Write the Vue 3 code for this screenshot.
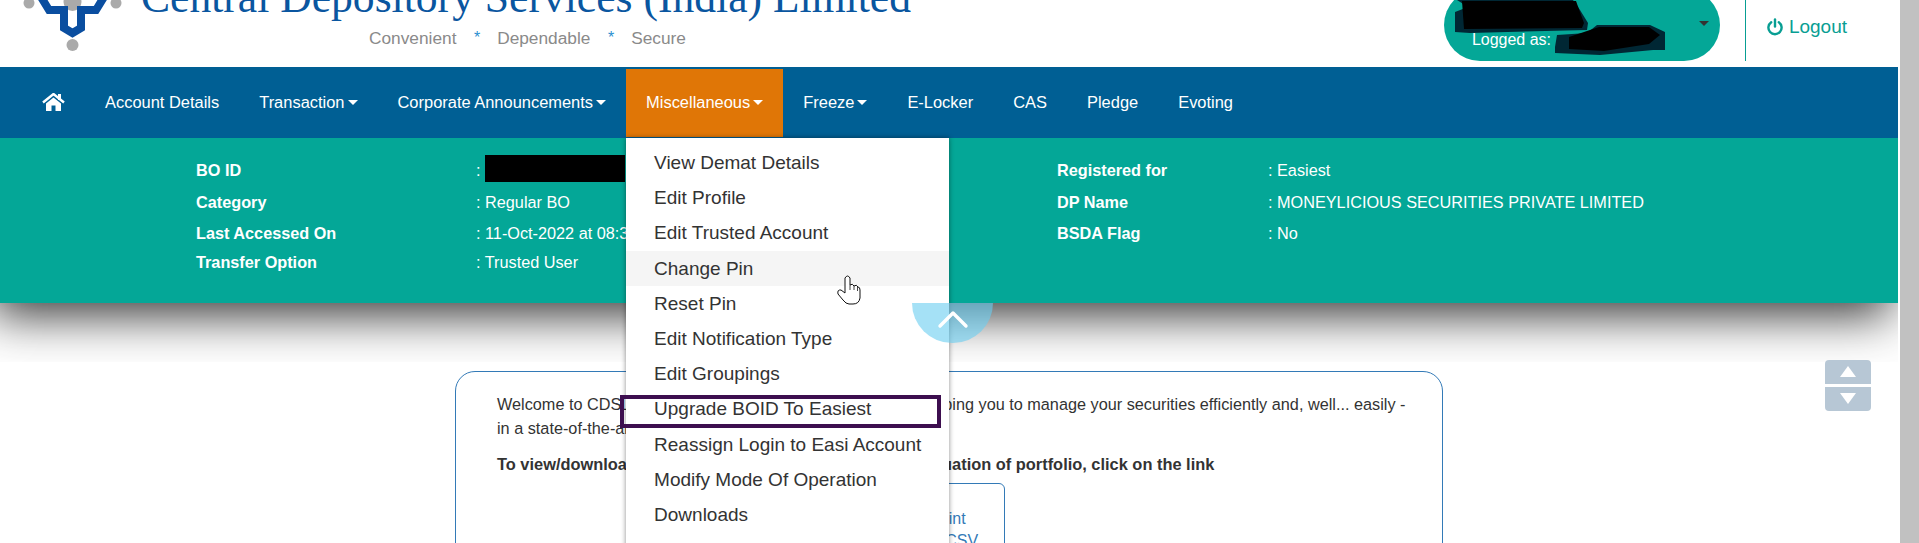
<script setup>
const navItems = [
  { label: 'Account Details' },
  { label: 'Transaction', caret: true },
  { label: 'Corporate Announcements', caret: true },
  { label: 'Miscellaneous', caret: true, active: true },
  { label: 'Freeze', caret: true },
  { label: 'E-Locker' },
  { label: 'CAS' },
  { label: 'Pledge' },
  { label: 'Evoting' }
]

const menuItems = [
  'View Demat Details',
  'Edit Profile',
  'Edit Trusted Account',
  'Change Pin',
  'Reset Pin',
  'Edit Notification Type',
  'Edit Groupings',
  'Upgrade BOID To Easiest',
  'Reassign Login to Easi Account',
  'Modify Mode Of Operation',
  'Downloads',
  'De-Register'
]

const details = [
  { label: 'BO ID', hidden: true, side: 'Registered for', sideValue: 'Easiest' },
  { label: 'Category', value: 'Regular BO', side: 'DP Name', sideValue: 'MONEYLICIOUS SECURITIES PRIVATE LIMITED' },
  { label: 'Last Accessed On', value: '11-Oct-2022 at 08:35 PM', side: 'BSDA Flag', sideValue: 'No' },
  { label: 'Transfer Option', value: 'Trusted User' }
]
</script>

<template>
  <div class="screen">
    <div class="page">
      <header class="top-bar">
        <svg class="logo" width="132" height="52" viewBox="0 0 132 52">
          <circle cx="29" cy="3" r="5.5" fill="#aaa" />
          <circle cx="116" cy="3" r="5.5" fill="#aaa" />
          <circle cx="72.5" cy="2" r="9" fill="#aaa" />
          <circle cx="72.5" cy="45" r="6" fill="#aaa" />
          <path d="M41 -3 L49 10 L64 10 L64 28 L72.5 33 L81 28 L81 10 L96 10 L104 -3" fill="none" stroke="#0a4ea0" stroke-width="8" />
        </svg>
        <div class="brand">
          <h1 class="brand-title">Central Depository Services (India) Limited</h1>
          <div class="brand-tag">
            <span>Convenient</span><i>*</i><span>Dependable</span><i>*</i><span>Secure</span>
          </div>
        </div>
        <div class="user-pill">
          <svg class="scribble" width="276" height="72" viewBox="0 0 276 72">
            <path d="M13 11 L129 11 L136 21 L144 34 L143 41 L26 44 L11 43 L11 23 L24 18 Z" fill="#012" opacity="0.85" />
            <path d="M18 12 L132 12 L140 34 L138 39 L20 40 Z" fill="#000" />
            <path d="M113 46 L111 58 L111 64 L156 66 L209 61 L221 61 L221 43 L206 36 L153 36 L143 44 Z" fill="#012" opacity="0.85" />
            <path d="M125 48 L125 60 L160 62 L205 55 L216 46 L205 38 L155 38 Z" fill="#000" />
          </svg>
          <span class="logged">Logged as:</span>
          <span class="pill-caret"></span>
        </div>
        <div class="logout">
          <svg width="16" height="18" viewBox="0 0 16 18" fill="none" stroke="#089e93" stroke-width="2.4" stroke-linecap="round">
            <path d="M8 1.5 V8.5" />
            <path d="M4.2 4.2 A6.6 6.6 0 1 0 11.8 4.2" />
          </svg>
          <span>Logout</span>
        </div>
      </header>

      <nav class="main-nav">
        <svg class="home" width="23" height="18" viewBox="0 0 23 18">
          <rect x="16" y="1" width="3" height="6" fill="#fff" />
          <path d="M1 9.5 L11.5 1 L22 9.5" fill="none" stroke="#fff" stroke-width="2.4" />
          <path d="M4 10.5 L11.5 4.5 L19 10.5 V18 H13.5 V12.5 H9.5 V18 H4 Z" fill="#fff" />
        </svg>
        <div v-for="item in navItems" :key="item.label" class="nav-item" :class="{ active: item.active }">
          {{ item.label }}<span v-if="item.caret" class="caret"></span>
          <div v-if="item.active" class="dropdown">
            <a v-for="entry in menuItems" :key="entry" class="dropdown-row" :class="{ hover: entry === 'Change Pin' }">{{ entry }}</a>
            <span class="mark"></span>
            <svg class="cursor" width="60" height="50" viewBox="0 0 60 50">
              <path d="M24 33 V18 Q26.5 14 29 18 V25 Q31.5 23 33 26 Q35.5 24 37 27 Q39 27 39 30 V38 Q38 44 32 44 H28 Q25 44 22 40 L17 34 Q16 29.5 20 30 L24 33 Z" fill="#fff" stroke="#111" stroke-width="1" />
              <path d="M29 25 V30 M33 26 V30 M36.5 27 V31" fill="none" stroke="#111" stroke-width="0.8" />
            </svg>
          </div>
        </div>
      </nav>

      <div class="summary-wrap">
        <section class="summary">
          <template v-for="row in details" :key="row.label">
            <div class="key">{{ row.label }}</div>
            <div>: <span v-if="row.hidden" class="blackout"></span>{{ row.value }}</div>
            <div class="key">{{ row.side }}</div>
            <div><template v-if="row.side">: {{ row.sideValue }}</template></div>
          </template>
        </section>
      </div>

      <main class="welcome">
        <p>Welcome to CDSL's Easiest, a convenient facility aimed at helping you to manage your securities efficiently and, well... easily - in a state-of-the-art environment.</p>
        <p class="strong">To view/download your Demat account statement and valuation of portfolio, click on the link</p>
        <div class="links">
          <a>View / Print</a>
          <a>View as CSV</a>
        </div>
      </main>

      <div class="collapse-tab">
        <svg width="81" height="40" viewBox="0 0 81 40">
          <path d="M28 23 L41 10 L54 23" fill="none" stroke="#fff" stroke-width="3.4" stroke-linecap="round" stroke-linejoin="round" />
        </svg>
      </div>

      <div class="scroll-btns">
        <button type="button" class="up"></button>
        <button type="button" class="down"></button>
      </div>
    </div>
    <div class="scrollbar"></div>
  </div>
</template>

<style>
html,
body {
  margin: 0;
  background: #fff;
}
</style>

<style scoped>
.screen {
  display: flex;
  height: 543px;
  overflow: hidden;
  font-family: "Liberation Sans", Arial, sans-serif;
  font-size: 16px;
  color: #333;
  background: #fff;
}

.page {
  position: relative;
  width: 1898px;
  flex: none;
}

.scrollbar {
  width: 19px;
  margin-left: 2px;
  flex: none;
  background: #c1c1c1;
}

.top-bar {
  display: flex;
  align-items: flex-start;
  height: 67px;
}

.logo {
  flex: none;
  width: 132px;
  margin-right: 9px;
}

.brand {
  flex: 1;
  min-width: 0;
}

.brand-title {
  height: 20px;
  margin: -13px 0 0;
  font-family: "Liberation Serif", "Times New Roman", serif;
  font-size: 43.6px;
  line-height: 20px;
  font-weight: 400;
  white-space: nowrap;
  color: #0a56a0;
}

.brand-tag {
  display: flex;
  gap: 11px;
  margin: 20px 0 0 228px;
  font-size: 17.3px;
  line-height: 22px;
  color: #8a8a8a;
}

.brand-tag i {
  font-style: normal;
  font-size: 16px;
  color: #2a8fd0;
  margin-right: 6px;
  margin-left: 6.5px;
}

.user-pill {
  position: relative;
  display: flex;
  justify-content: space-between;
  flex: none;
  box-sizing: border-box;
  width: 276px;
  height: 72px;
  margin-top: -11px;
  padding: 40px 11px 0 28px;
  border-radius: 36px;
  background: #04a797;
  color: #fff;
  line-height: 22px;
}

.scribble {
  position: absolute;
  top: 0;
  left: 0;
}

.pill-caret {
  margin-top: -8px;
  width: 0;
  height: 0;
  border-top: 5px solid #333;
  border-left: 5px solid transparent;
  border-right: 5px solid transparent;
}

.logout {
  display: flex;
  align-items: center;
  gap: 6px;
  flex: none;
  box-sizing: border-box;
  height: 61px;
  margin: 0 51px 0 25px;
  padding: 0 0 7px 21px;
  border-left: 1px solid #089e93;
  font-size: 19px;
  color: #089e93;
}

.main-nav {
  display: flex;
  align-items: flex-start;
  height: 71px;
  padding-left: 22px;
  background: #005f94;
  color: #fff;
  font-size: 16.45px;
}

.home {
  flex: none;
  margin: 26px 20px 0 20px;
}

.nav-item {
  position: relative;
  display: flex;
  align-items: center;
  box-sizing: border-box;
  height: 68px;
  margin-top: 2px;
  padding: 0 20px 2px;
  white-space: nowrap;
}

.nav-item.active {
  background: #e07606;
}

.caret {
  margin-left: 3px;
  width: 0;
  height: 0;
  border-top: 5px solid #fff;
  border-left: 5px solid transparent;
  border-right: 5px solid transparent;
}

.dropdown {
  position: absolute;
  top: calc(100% + 1px);
  left: 0;
  z-index: 5;
  box-sizing: border-box;
  width: 323px;
  padding: 7px 0;
  background: #fff;
  color: #333;
  font-size: 19px;
  box-shadow: 0 0 5px rgba(0, 0, 0, 0.45);
}

.dropdown-row {
  display: block;
  height: 35.2px;
  padding-left: 28px;
  line-height: 35px;
}

.dropdown-row.hover {
  background: #f5f5f5;
}

.mark {
  position: absolute;
  top: 257px;
  left: -6px;
  box-sizing: border-box;
  width: 321px;
  height: 33px;
  border: 4px solid #3d0e4f;
}

.cursor {
  position: absolute;
  top: 122px;
  left: 195px;
}

.summary-wrap {
  height: 224px;
  overflow: hidden;
}

.summary {
  display: grid;
  grid-template-columns: 280px 581px 211px 1fr;
  grid-template-rows: 24px 23px 21px 22px;
  row-gap: 8px;
  box-sizing: border-box;
  height: 165px;
  padding: 21px 0 0 196px;
  background: #04a797;
  color: #fff;
  font-size: 16.25px;
  line-height: 22px;
  box-shadow: -8px 12px 46px rgba(0, 0, 0, 0.8);
}

.key {
  font-weight: 700;
}

.blackout {
  display: inline-block;
  width: 140px;
  height: 27px;
  margin-top: -4px;
  vertical-align: top;
  background: #000;
}

.welcome {
  box-sizing: border-box;
  width: 988px;
  height: 400px;
  margin: 9px 0 0 455px;
  padding: 20px 30px 0 41px;
  border: 1px solid #337ab7;
  border-radius: 20px;
  font-size: 16.25px;
  line-height: 24px;
}

.welcome p {
  margin: 0 0 12px;
}

.strong {
  font-weight: 700;
  font-size: 16.4px;
}

.links {
  display: inline-flex;
  flex-direction: column;
  margin: -5px 0 0 361px;
  padding: 24px 26px 0;
  height: 100px;
  border: 1px solid #337ab7;
  border-radius: 6px;
  font-size: 16px;
  line-height: 22px;
  color: #337ab7;
}

.collapse-tab {
  position: absolute;
  top: 303px;
  left: 912px;
  z-index: 6;
  width: 81px;
  height: 40px;
  border-radius: 0 0 41px 41px;
  background: rgba(105, 205, 240, 0.6);
}

.collapse-tab svg {
  display: block;
}

.scroll-btns {
  position: absolute;
  top: 360px;
  right: 27px;
  display: flex;
  flex-direction: column;
  gap: 3px;
}

.scroll-btns button {
  position: relative;
  width: 46px;
  height: 24px;
  padding: 0;
  border: none;
  background: #b7c7d5;
}

.scroll-btns .up {
  border-radius: 4px 4px 0 0;
}

.scroll-btns .down {
  border-radius: 0 0 4px 4px;
}

.scroll-btns button::after {
  content: "";
  position: absolute;
  left: 15px;
  top: 6px;
  border-left: 8px solid transparent;
  border-right: 8px solid transparent;
}

.scroll-btns .up::after {
  border-bottom: 11px solid #fff;
}

.scroll-btns .down::after {
  border-top: 11px solid #fff;
}
</style>
